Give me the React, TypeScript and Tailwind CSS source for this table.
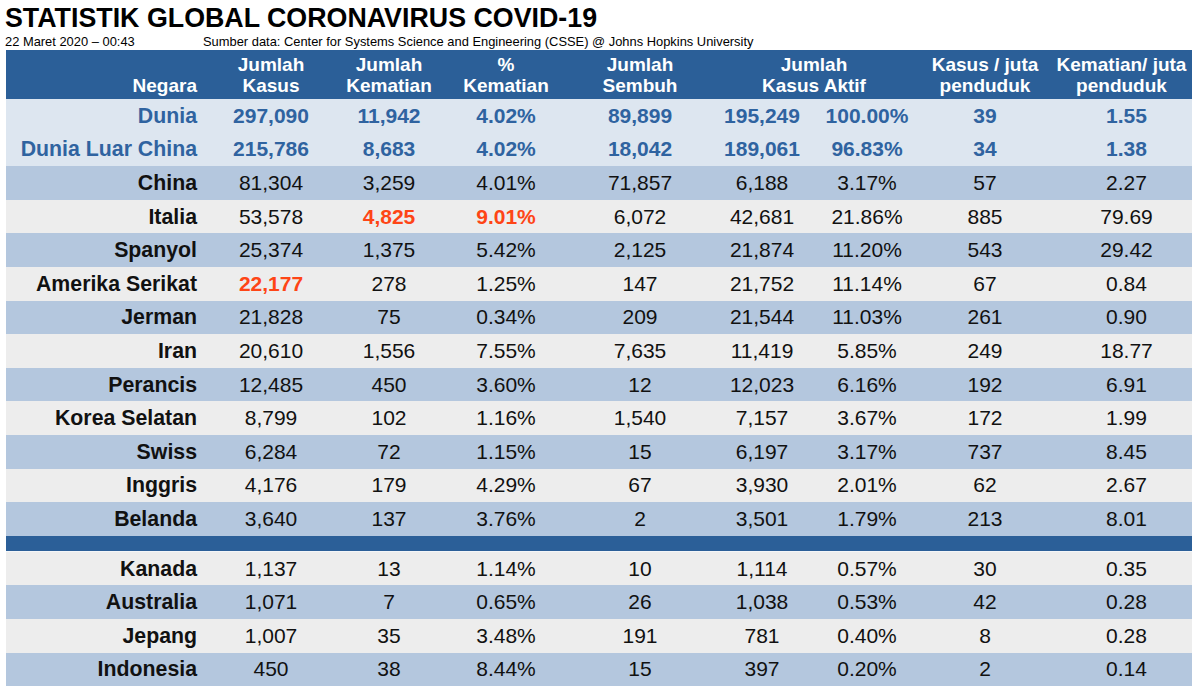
const COLS = 'grid grid-cols-[199px_132px_104px_130px_138px_106px_104px_132px_141px]';

type Row = [string, string, string, string, string, string, string, string, string];

const WORLD: Row[] = [
  ['Dunia', '297,090', '11,942', '4.02%', '89,899', '195,249', '100.00%', '39', '1.55'],
  ['Dunia Luar China', '215,786', '8,683', '4.02%', '18,042', '189,061', '96.83%', '34', '1.38'],
];

const TOP: Row[] = [
  ['China', '81,304', '3,259', '4.01%', '71,857', '6,188', '3.17%', '57', '2.27'],
  ['Italia', '53,578', '4,825', '9.01%', '6,072', '42,681', '21.86%', '885', '79.69'],
  ['Spanyol', '25,374', '1,375', '5.42%', '2,125', '21,874', '11.20%', '543', '29.42'],
  ['Amerika Serikat', '22,177', '278', '1.25%', '147', '21,752', '11.14%', '67', '0.84'],
  ['Jerman', '21,828', '75', '0.34%', '209', '21,544', '11.03%', '261', '0.90'],
  ['Iran', '20,610', '1,556', '7.55%', '7,635', '11,419', '5.85%', '249', '18.77'],
  ['Perancis', '12,485', '450', '3.60%', '12', '12,023', '6.16%', '192', '6.91'],
  ['Korea Selatan', '8,799', '102', '1.16%', '1,540', '7,157', '3.67%', '172', '1.99'],
  ['Swiss', '6,284', '72', '1.15%', '15', '6,197', '3.17%', '737', '8.45'],
  ['Inggris', '4,176', '179', '4.29%', '67', '3,930', '2.01%', '62', '2.67'],
  ['Belanda', '3,640', '137', '3.76%', '2', '3,501', '1.79%', '213', '8.01'],
];

const OTHERS: Row[] = [
  ['Kanada', '1,137', '13', '1.14%', '10', '1,114', '0.57%', '30', '0.35'],
  ['Australia', '1,071', '7', '0.65%', '26', '1,038', '0.53%', '42', '0.28'],
  ['Jepang', '1,007', '35', '3.48%', '191', '781', '0.40%', '8', '0.28'],
  ['Indonesia', '450', '38', '8.44%', '15', '397', '0.20%', '2', '0.14'],
];

// highlighted (max) values
const RED: Record<string, number[]> = {
  Italia: [2, 3],
  'Amerika Serikat': [1],
};

function DataRow({ row, bg, world }: { row: Row; bg: string; world?: boolean }) {
  const red = RED[row[0]] ?? [];
  return (
    <div className={`${COLS} h-[33.6px] items-center text-[21px] leading-[24px] ${bg}`}>
      <div className={`pr-[8px] text-right font-bold text-[21.3px] ${world ? 'text-[#2f63a0]' : 'text-[#111]'}`}>{row[0]}</div>
      {row.slice(1).map((v, i) => (
        <div
          key={i}
          className={`text-center ${i === 7 ? 'pl-[10px]' : ''} ${
            world ? 'font-bold text-[#2f63a0]' : red.includes(i + 1) ? 'font-bold text-[#fe4516]' : 'text-[#111]'
          }`}
        >
          {v}
        </div>
      ))}
    </div>
  );
}

export default function App() {
  return (
    <div className="w-[1200px] h-[695px] bg-white font-['Liberation_Sans',Arial,sans-serif] overflow-hidden">
      <div className="px-[5px] pt-[3px]">
        <h1 className="text-[26.8px] font-bold leading-[30px] text-black">STATISTIK GLOBAL CORONAVIRUS COVID-19</h1>
        <div className="flex text-[12.9px] leading-[16px] text-black mt-[1px]">
          <span className="w-[198px]">22 Maret 2020 – 00:43</span>
          <span>Sumber data: Center for Systems Science and Engineering (CSSE) @ Johns Hopkins University</span>
        </div>
      </div>

      <div className="ml-[6px] w-[1186px]">
        <div className={`${COLS} h-[49px] items-end pb-[3px] bg-[#2b5f98] text-white font-bold text-[19px] leading-[21px]`}>
          <div className="pr-[8px] text-right">Negara</div>
          <div className="text-center">Jumlah<br />Kasus</div>
          <div className="text-center">Jumlah<br />Kematian</div>
          <div className="text-center">%<br />Kematian</div>
          <div className="text-center">Jumlah<br />Sembuh</div>
          <div className="col-span-2 text-center">Jumlah<br />Kasus Aktif</div>
          <div className="text-center">Kasus / juta<br />penduduk</div>
          <div className="text-center">Kematian/ juta<br />penduduk</div>
        </div>

        {WORLD.map((r) => (
          <DataRow key={r[0]} row={r} bg="bg-[#dde6f0]" world />
        ))}
        {TOP.map((r, i) => (
          <DataRow key={r[0]} row={r} bg={i % 2 === 0 ? 'bg-[#b4c7de]' : 'bg-[#ededed]'} />
        ))}

        <div className="h-[16px] bg-[#2b5f98] border-b border-[#f4f6f8]" />

        {OTHERS.map((r, i) => (
          <DataRow key={r[0]} row={r} bg={i % 2 === 0 ? 'bg-[#ededed]' : 'bg-[#b4c7de]'} />
        ))}
      </div>
    </div>
  );
}
